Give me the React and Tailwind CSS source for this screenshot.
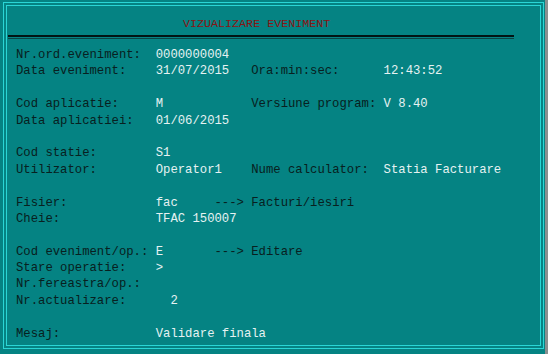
import React from "react";

const L = "text-[#082020]";
const V = "text-[#e6f2f2]";

const rows = [
  [["Nr.ord.eveniment:  ", L], ["0000000004", V]],
  [["Data eveniment:    ", L], ["31/07/2015", V], ["   Ora:min:sec:      ", L], ["12:43:52", V]],
  null,
  [["Cod aplicatie:     ", L], ["M", V], ["            Versiune program: ", L], ["V 8.40", V]],
  [["Data aplicatiei:   ", L], ["01/06/2015", V]],
  null,
  [["Cod statie:        ", L], ["S1", V]],
  [["Utilizator:        ", L], ["Operator1", V], ["    Nume calculator:  ", L], ["Statia Facturare", V]],
  null,
  [["Fisier:            ", L], ["fac", V], ["     ---> Facturi/iesiri", L]],
  [["Cheie:             ", L], ["TFAC 150007", V]],
  null,
  [["Cod eveniment/op.: ", L], ["E", V], ["       ---> Editare", L]],
  [["Stare operatie:    ", L], [">", V]],
  [["Nr.fereastra/op.:", L]],
  [["Nr.actualizare:      ", L], ["2", V]],
  null,
  [["Mesaj:             ", L], ["Validare finala", V]],
];

export default function App() {
  return (
    <div className="w-[548px] h-[354px] bg-[#058383] flex overflow-hidden">
      <div className="flex-1 pt-[2px] pl-[3px] pr-[1px]">
        <div className="h-[347px] border border-[#2ad6d6] p-[2px]">
          <div className="h-full border border-[#2ad6d6] flex flex-col">
            <div className="h-[29px] pl-[176px] pt-[3px]">
              <span
                className="text-[11.7px] leading-[16px] text-[#8a1414] whitespace-pre"
                style={{ fontFamily: '"Liberation Mono", "DejaVu Sans Mono", monospace' }}
              >
                VIZUALIZARE EVENIMENT
              </span>
            </div>
            <div className="ml-[1px] w-[506px] flex flex-col">
              <div className="h-[2px] bg-[#021414]" />
              <div className="h-[1px]" />
              <div className="h-[1px] bg-[#0b4444]" />
            </div>
            <div
              className="pl-[9px] pt-[8px] flex flex-col text-[12.25px] leading-[16.4px]"
              style={{ fontFamily: '"Liberation Mono", "DejaVu Sans Mono", monospace' }}
            >
              {rows.map((r, i) => (
                <div key={i} className="h-[16.4px] whitespace-pre">
                  {r
                    ? r.map(([t, c], j) => (
                        <span key={j} className={c}>
                          {t}
                        </span>
                      ))
                    : " "}
                </div>
              ))}
            </div>
          </div>
        </div>
      </div>
      <div className="w-[3px] h-full bg-[#8a8f8f]" />
    </div>
  );
}
